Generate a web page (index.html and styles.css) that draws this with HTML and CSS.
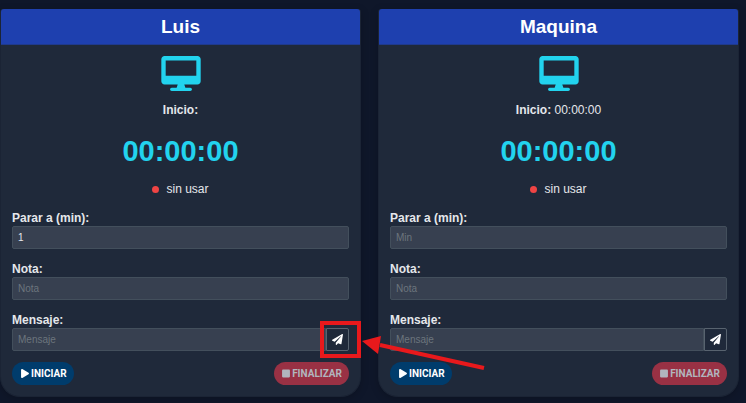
FILE: index.html
```html
<!DOCTYPE html>
<html lang="es">
<head>
<meta charset="utf-8">
<meta name="viewport" content="width=device-width, initial-scale=1">
<title>Control de equipos</title>
<link rel="stylesheet" href="styles.css">
</head>
<body>
<svg class="defs" aria-hidden="true">
  <symbol id="desktop" viewBox="0 0 576 512"><path fill="currentColor" d="M528 0H48C21.500 0 0 21.500 0 48v320c0 26.500 21.500 48 48 48h192l-16 48h-72c-13.300 0-24 10.700-24 24s10.700 24 24 24h272c13.300 0 24-10.700 24-24s-10.700-24-24-24h-72l-16-48h192c26.500 0 48-21.500 48-48V48c0-26.500-21.500-48-48-48zm-16 288H64V64h448v224z"/></symbol>
  <symbol id="plane" viewBox="0 0 512 512"><path fill="currentColor" d="M476 3.200L12.500 270.600c-18.100 10.400-15.800 35.600 2.200 43.200L121 358.400l287.300-253.200c5.500-4.900 13.300 2.600 8.600 8.300L176 407v80.500c0 23.600 28.500 32.900 42.500 15.800L282 426l124.600 52.200c14.200 6 30.400-2.900 33-18.200l72-432C515 7.800 493.300-6.800 476 3.200z"/></symbol>
  <symbol id="play" viewBox="0 0 448 512"><path fill="currentColor" d="M424.400 214.700L72.400 6.600C43.800-10.300 0 6.100 0 47.900V464c0 37.500 40.700 60.100 72.400 41.300l352-208c31.400-18.500 31.500-64.100 0-82.600z"/></symbol>
  <symbol id="stop" viewBox="0 0 448 512"><path fill="currentColor" d="M400 32H48C21.500 32 0 53.500 0 80v352c0 26.500 21.500 48 48 48h352c26.500 0 48-21.500 48-48V80c0-26.500-21.500-48-48-48z"/></symbol>
</svg>
<main class="board">
  <section class="card">
    <h2 class="card-title">Luis</h2>
    <div class="card-body">
      <svg class="screen"><use href="#desktop"/></svg>
      <p class="start"><strong>Inicio:</strong></p>
      <p class="timer">00:00:00</p>
      <p class="status"><span class="dot"></span>sin usar</p>
      <div class="field">
        <label for="min-1">Parar a (min):</label>
        <input id="min-1" type="text" placeholder="Min" value="1">
      </div>
      <div class="field">
        <label for="note-1">Nota:</label>
        <input id="note-1" type="text" placeholder="Nota">
      </div>
      <div class="field">
        <label for="msg-1">Mensaje:</label>
        <div class="group">
          <input id="msg-1" type="text" placeholder="Mensaje">
          <button class="send" type="button" aria-label="Enviar"><svg><use href="#plane"/></svg></button>
          <svg class="callout" viewBox="0 0 170 52" aria-hidden="true">
            <rect x="2" y="2" width="37" height="33"/>
            <path d="M60 24L164 47"/>
            <polygon points="42,20 61,15 58,33"/>
          </svg>
        </div>
      </div>
      <div class="actions">
        <button class="pill go" type="button"><svg><use href="#play"/></svg>INICIAR</button>
        <button class="pill end" type="button" disabled><svg><use href="#stop"/></svg>FINALIZAR</button>
      </div>
    </div>
  </section>
  <section class="card">
    <h2 class="card-title">Maquina</h2>
    <div class="card-body">
      <svg class="screen"><use href="#desktop"/></svg>
      <p class="start"><strong>Inicio:</strong> 00:00:00</p>
      <p class="timer">00:00:00</p>
      <p class="status"><span class="dot"></span>sin usar</p>
      <div class="field">
        <label for="min-2">Parar a (min):</label>
        <input id="min-2" type="text" placeholder="Min">
      </div>
      <div class="field">
        <label for="note-2">Nota:</label>
        <input id="note-2" type="text" placeholder="Nota">
      </div>
      <div class="field">
        <label for="msg-2">Mensaje:</label>
        <div class="group">
          <input id="msg-2" type="text" placeholder="Mensaje">
          <button class="send" type="button" aria-label="Enviar"><svg><use href="#plane"/></svg></button>
        </div>
      </div>
      <div class="actions">
        <button class="pill go" type="button"><svg><use href="#play"/></svg>INICIAR</button>
        <button class="pill end" type="button" disabled><svg><use href="#stop"/></svg>FINALIZAR</button>
      </div>
    </div>
  </section>
</main>
</body>
</html>
```
FILE: styles.css
```css
* { box-sizing: border-box; }
body {
  margin: 0;
  background: #0f172a;
  color: #e5e7eb;
  font: 12px/18px "Liberation Sans", Arial, sans-serif;
}
p, h2 { margin: 0; }
.defs { display: none; }
.board {
  display: grid;
  grid-template-columns: 1fr 1fr;
  gap: 17px;
  padding: 9px 7px 7px 0;
}
.card {
  background: #1f293a;
  border: 1px solid #1b2435;
  border-top: 0;
  border-radius: 3px 3px 20px 20px;
  box-shadow: 0 2px 8px rgba(0, 0, 0, 0.2);
}
.card-title {
  padding: 5px 11px;
  background: #1e40af;
  border-bottom: 1px solid #1f3a8c;
  border-radius: 3px 3px 0 0;
  color: #fff;
  font-size: 19px;
  line-height: 25px;
  text-align: center;
}
.card-body {
  display: flex;
  flex-direction: column;
  padding: 11px;
}
.screen {
  align-self: center;
  width: 40px;
  height: 35px;
  color: #22d3ee;
}
.start, .status, .timer { text-align: center; }
.start { margin-top: 10px; }
.timer {
  margin: 15px 0 12px;
  color: #22d3ee;
  font-size: 29px;
  font-weight: bold;
  line-height: 34px;
}
.status {
  display: flex;
  align-items: center;
  justify-content: center;
  gap: 7px;
  margin-bottom: 10px;
}
.dot {
  width: 7px;
  height: 7px;
  border-radius: 50%;
  background: #ef4444;
}
.field { margin-bottom: 11px; }
.field + .field { margin-top: -1px; }
.field label {
  display: block;
  padding-top: 2px;
  font-weight: bold;
  line-height: 16px;
}
.field input {
  display: block;
  width: 100%;
  min-width: 0;
  height: 23px;
  padding: 0 5px;
  background: #374050;
  border: 1px solid #434f5c;
  border-radius: 2px;
  color: #e5e7eb;
  font: 10px/15px "Liberation Sans", Arial, sans-serif;
}
.field input::placeholder { color: #6c757d; opacity: 1; }
.group {
  position: relative;
  display: flex;
}
.group input {
  flex: 1;
  border-radius: 2px 0 0 2px;
}
.send {
  display: grid;
  place-items: center;
  width: 23px;
  height: 23px;
  padding: 0;
  background: #1f293a;
  border: 1px solid #58636f;
  border-radius: 0 2px 2px 0;
  color: #fff;
}
.send svg { width: 11px; height: 11px; }
.callout {
  position: absolute;
  z-index: 1;
  top: -7px;
  left: calc(100% - 29px);
  width: 170px;
  height: 52px;
  fill: none;
  stroke: #e8191c;
  stroke-width: 4;
  pointer-events: none;
}
.callout polygon { fill: #e8191c; stroke: none; }
.actions {
  display: flex;
  justify-content: space-between;
}
.pill {
  display: flex;
  align-items: center;
  gap: 2px;
  height: 23px;
  padding: 0 7px 0 8px;
  border: 0;
  border-radius: 12px;
  font: bold 10px/15px Roboto, sans-serif;
}
.pill svg { width: 8px; height: 9px; }
.go { padding-left: 9px; background: #003c6c; color: #fff; }
.end { background: #993144; color: #b1b6be; }
```
